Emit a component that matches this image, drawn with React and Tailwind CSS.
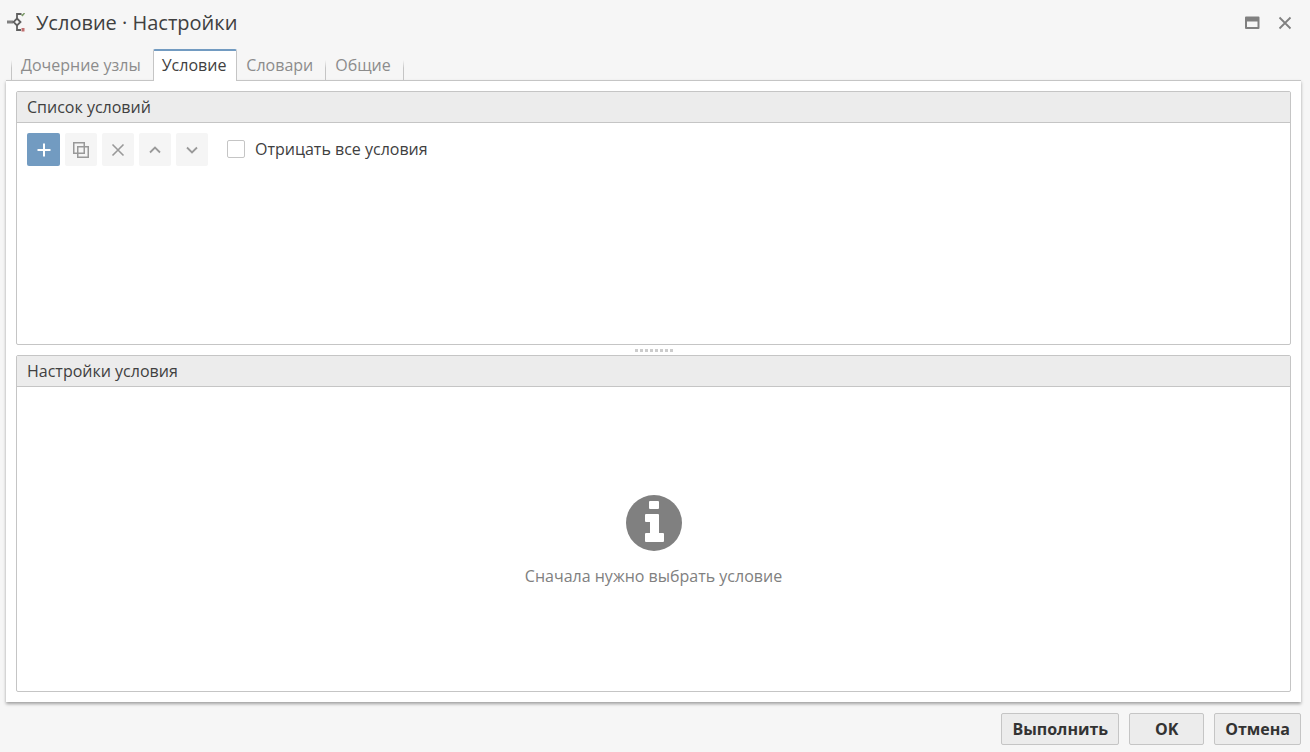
import React, { useState } from 'react';

const tabs = [
  { id: 'children', name: 'Дочерние узлы' },
  { id: 'condition', name: 'Условие' },
  { id: 'dictionaries', name: 'Словари' },
  { id: 'general', name: 'Общие' },
];

const ConditionIcon = () => (
  <svg className="w-5 h-5" viewBox="0 0 20 20" fill="none" aria-hidden="true">
    <path d="M1 9h6" stroke="#808080" strokeWidth="3" />
    <path d="M11 6V1h4.500M11 12v5h4" stroke="#606060" strokeWidth="1.800" />
    <path d="M11 5.500l3.500 3.500L11 12.500 7.500 9z" stroke="#606060" strokeWidth="1.800" fill="#f6f6f6" />
    <path d="M15.500 1.500l1 1 2-2.500" stroke="#7b9a68" strokeWidth="1.500" />
    <path d="M15.500 15h3v3.500h-3z" fill="#c07070" />
  </svg>
);

const MaximizeIcon = () => (
  <svg className="w-4 h-4" viewBox="0 0 16 16" fill="none" aria-hidden="true">
    <path fillRule="evenodd" d="M2 1.500h12.500a1 1 0 0 1 1 1V13a1 1 0 0 1-1 1H2a1 1 0 0 1-1-1V2.500a1 1 0 0 1 1-1zm1 5V12h10.500V6.500z" fill="#808080" />
  </svg>
);

const CloseIcon = () => (
  <svg className="w-4 h-4" viewBox="0 0 16 16" fill="none" aria-hidden="true">
    <path d="M2.500 2.500l11 11M13.500 2.500l-11 11" stroke="#808080" strokeWidth="1.800" />
  </svg>
);

const toolIcons = {
  add: <path d="M8 1.500v13M1.500 8h13" strokeWidth="2" />,
  copy: <path d="M.75 .75h10.500v10.500H.75zM4.750 4.750h10.500v10.500H4.750z" strokeWidth="1.500" />,
  remove: <path d="M2.500 2.500l11 11M13.500 2.500l-11 11" strokeWidth="1.600" />,
  up: <path d="M3 10.500L8 5.500l5 5" strokeWidth="1.800" />,
  down: <path d="M3 5.500L8 10.500l5-5" strokeWidth="1.800" />,
};

const tools = [
  { icon: 'add', label: 'Добавить', enabled: true },
  { icon: 'copy', label: 'Клонировать' },
  { icon: 'remove', label: 'Удалить' },
  { icon: 'up', label: 'Вверх' },
  { icon: 'down', label: 'Вниз' },
];

const ToolButton = ({ icon, label, enabled }) => (
  <button
    type="button"
    aria-label={label}
    disabled={!enabled}
    className={`h-[33px] flex items-center justify-center rounded-xs ${
      enabled ? 'w-[33px] bg-[#729bc1] text-white' : 'w-8 bg-[#f5f5f5] text-[#999999]'
    }`}
  >
    <svg className="w-4 h-4" viewBox="0 0 16 16" fill="none" stroke="currentColor" aria-hidden="true">
      {toolIcons[icon]}
    </svg>
  </button>
);

const Panel = ({ title, className, children }) => (
  <section className={`flex flex-col border border-[#c5c5c5] rounded-xs ${className}`}>
    <h2 className="h-[31px] shrink-0 px-[10px] leading-[30px] bg-[#ececec] border-b border-[#c5c5c5]">{title}</h2>
    {children}
  </section>
);

const FooterButton = ({ children, className = '' }) => (
  <button
    type="button"
    className={`h-8 px-[10px] font-bold leading-[30px] text-[#333333] bg-[#ececec] border border-[#c5c5c5] rounded-xs ${className}`}
  >
    {children}
  </button>
);

const App = () => {
  const [activeTab, setActiveTab] = useState('condition');
  const [negate, setNegate] = useState(false);

  return (
    <div className="min-h-screen flex flex-col bg-[#f6f6f6] text-base text-[#404040] font-['Open_Sans',sans-serif]">
      {/* Title bar */}
      <header className="h-12 flex items-center pl-[6px] pr-[17px] pb-[2px]">
        <ConditionIcon />
        <h1 className="ml-[10px] flex-1 text-xl">Условие · Настройки</h1>
        <button type="button" aria-label="Развернуть" className="mr-[17px]">
          <MaximizeIcon />
        </button>
        <button type="button" aria-label="Закрыть">
          <CloseIcon />
        </button>
      </header>

      {/* Tabs */}
      <div role="tablist" className="relative z-10 ml-[11px] flex h-[33px] -mb-px">
        <span className="w-px mt-3 mb-px bg-linear-to-b from-transparent to-[#c5c5c5] to-40%" />
        {tabs.map((tab, index) => {
          const active = tab.id === activeTab;
          const nextActive = tabs[index + 1]?.id === activeTab;
          return (
            <React.Fragment key={tab.id}>
              <button
                type="button"
                role="tab"
                aria-selected={active}
                onClick={() => setActiveTab(tab.id)}
                className={
                  active
                    ? 'mt-px pl-2 pr-[10px] pb-[2px] bg-white border-x border-x-[#c5c5c5] border-t-2 border-t-[#729bc1] rounded-t-xs'
                    : 'pl-[9px] pr-3 pt-[2px] pb-px text-[#8c8c8c]'
                }
              >
                {tab.name}
              </button>
              {!active && !nextActive && (
                <span className="w-px mt-3 mb-px bg-linear-to-b from-transparent to-[#c5c5c5] to-40%" />
              )}
            </React.Fragment>
          );
        })}
      </div>

      {/* Content */}
      <main className="flex-1 flex flex-col ml-[6px] mr-[9px] p-[10px] bg-white border-t border-[#c5c5c5] shadow-[0_2px_3px_rgba(0,0,0,0.35)]">
        <Panel title="Список условий" className="flex-[43_1_0]">
          <div className="flex items-center gap-[5px] p-[10px]">
            {tools.map((tool) => (
              <ToolButton key={tool.icon} {...tool} />
            ))}
            <label className="ml-[14px] pb-px flex items-center gap-[10px]">
              <input
                type="checkbox"
                checked={negate}
                onChange={(e) => setNegate(e.target.checked)}
                className="appearance-none w-[18px] h-[18px] bg-white border border-[#c5c5c5] rounded-xs checked:bg-[#729bc1]"
              />
              Отрицать все условия
            </label>
          </div>
        </Panel>

        {/* Splitter */}
        <div role="separator" className="h-[10px] shrink-0 flex items-center justify-center gap-[2px]">
          {Array.from({ length: 8 }, (_, i) => (
            <span key={i} className="w-[3px] h-[3px] bg-[#cccccc]" />
          ))}
        </div>

        <Panel title="Настройки условия" className="flex-[57_1_0]">
          <div className="flex-1 flex flex-col items-center justify-center pt-1 text-[#808080]">
            <svg className="w-14 h-14" viewBox="0 0 56 56" aria-hidden="true">
              <circle cx="28" cy="28" r="28" fill="#808080" />
              <path d="M24 6h8q1 0 1 1v6q0 1-1 1h-8q-1 0-1-1V7q0-1 1-1zM20 19h12q1 0 1 1v18h4q1 0 1 1v7q0 1-1 1H20q-1 0-1-1v-7q0-1 1-1h4V27h-4q-1 0-1-1v-6q0-1 1-1z" fill="#ffffff" />
            </svg>
            <p className="mt-[13px]">Сначала нужно выбрать условие</p>
          </div>
        </Panel>
      </main>

      {/* Footer */}
      <footer className="flex justify-end gap-[10px] pt-[11px] pb-[7px] pr-[9px]">
        <FooterButton>Выполнить</FooterButton>
        <FooterButton className="min-w-[75px]">OK</FooterButton>
        <FooterButton>Отмена</FooterButton>
      </footer>
    </div>
  );
};

export default App;
